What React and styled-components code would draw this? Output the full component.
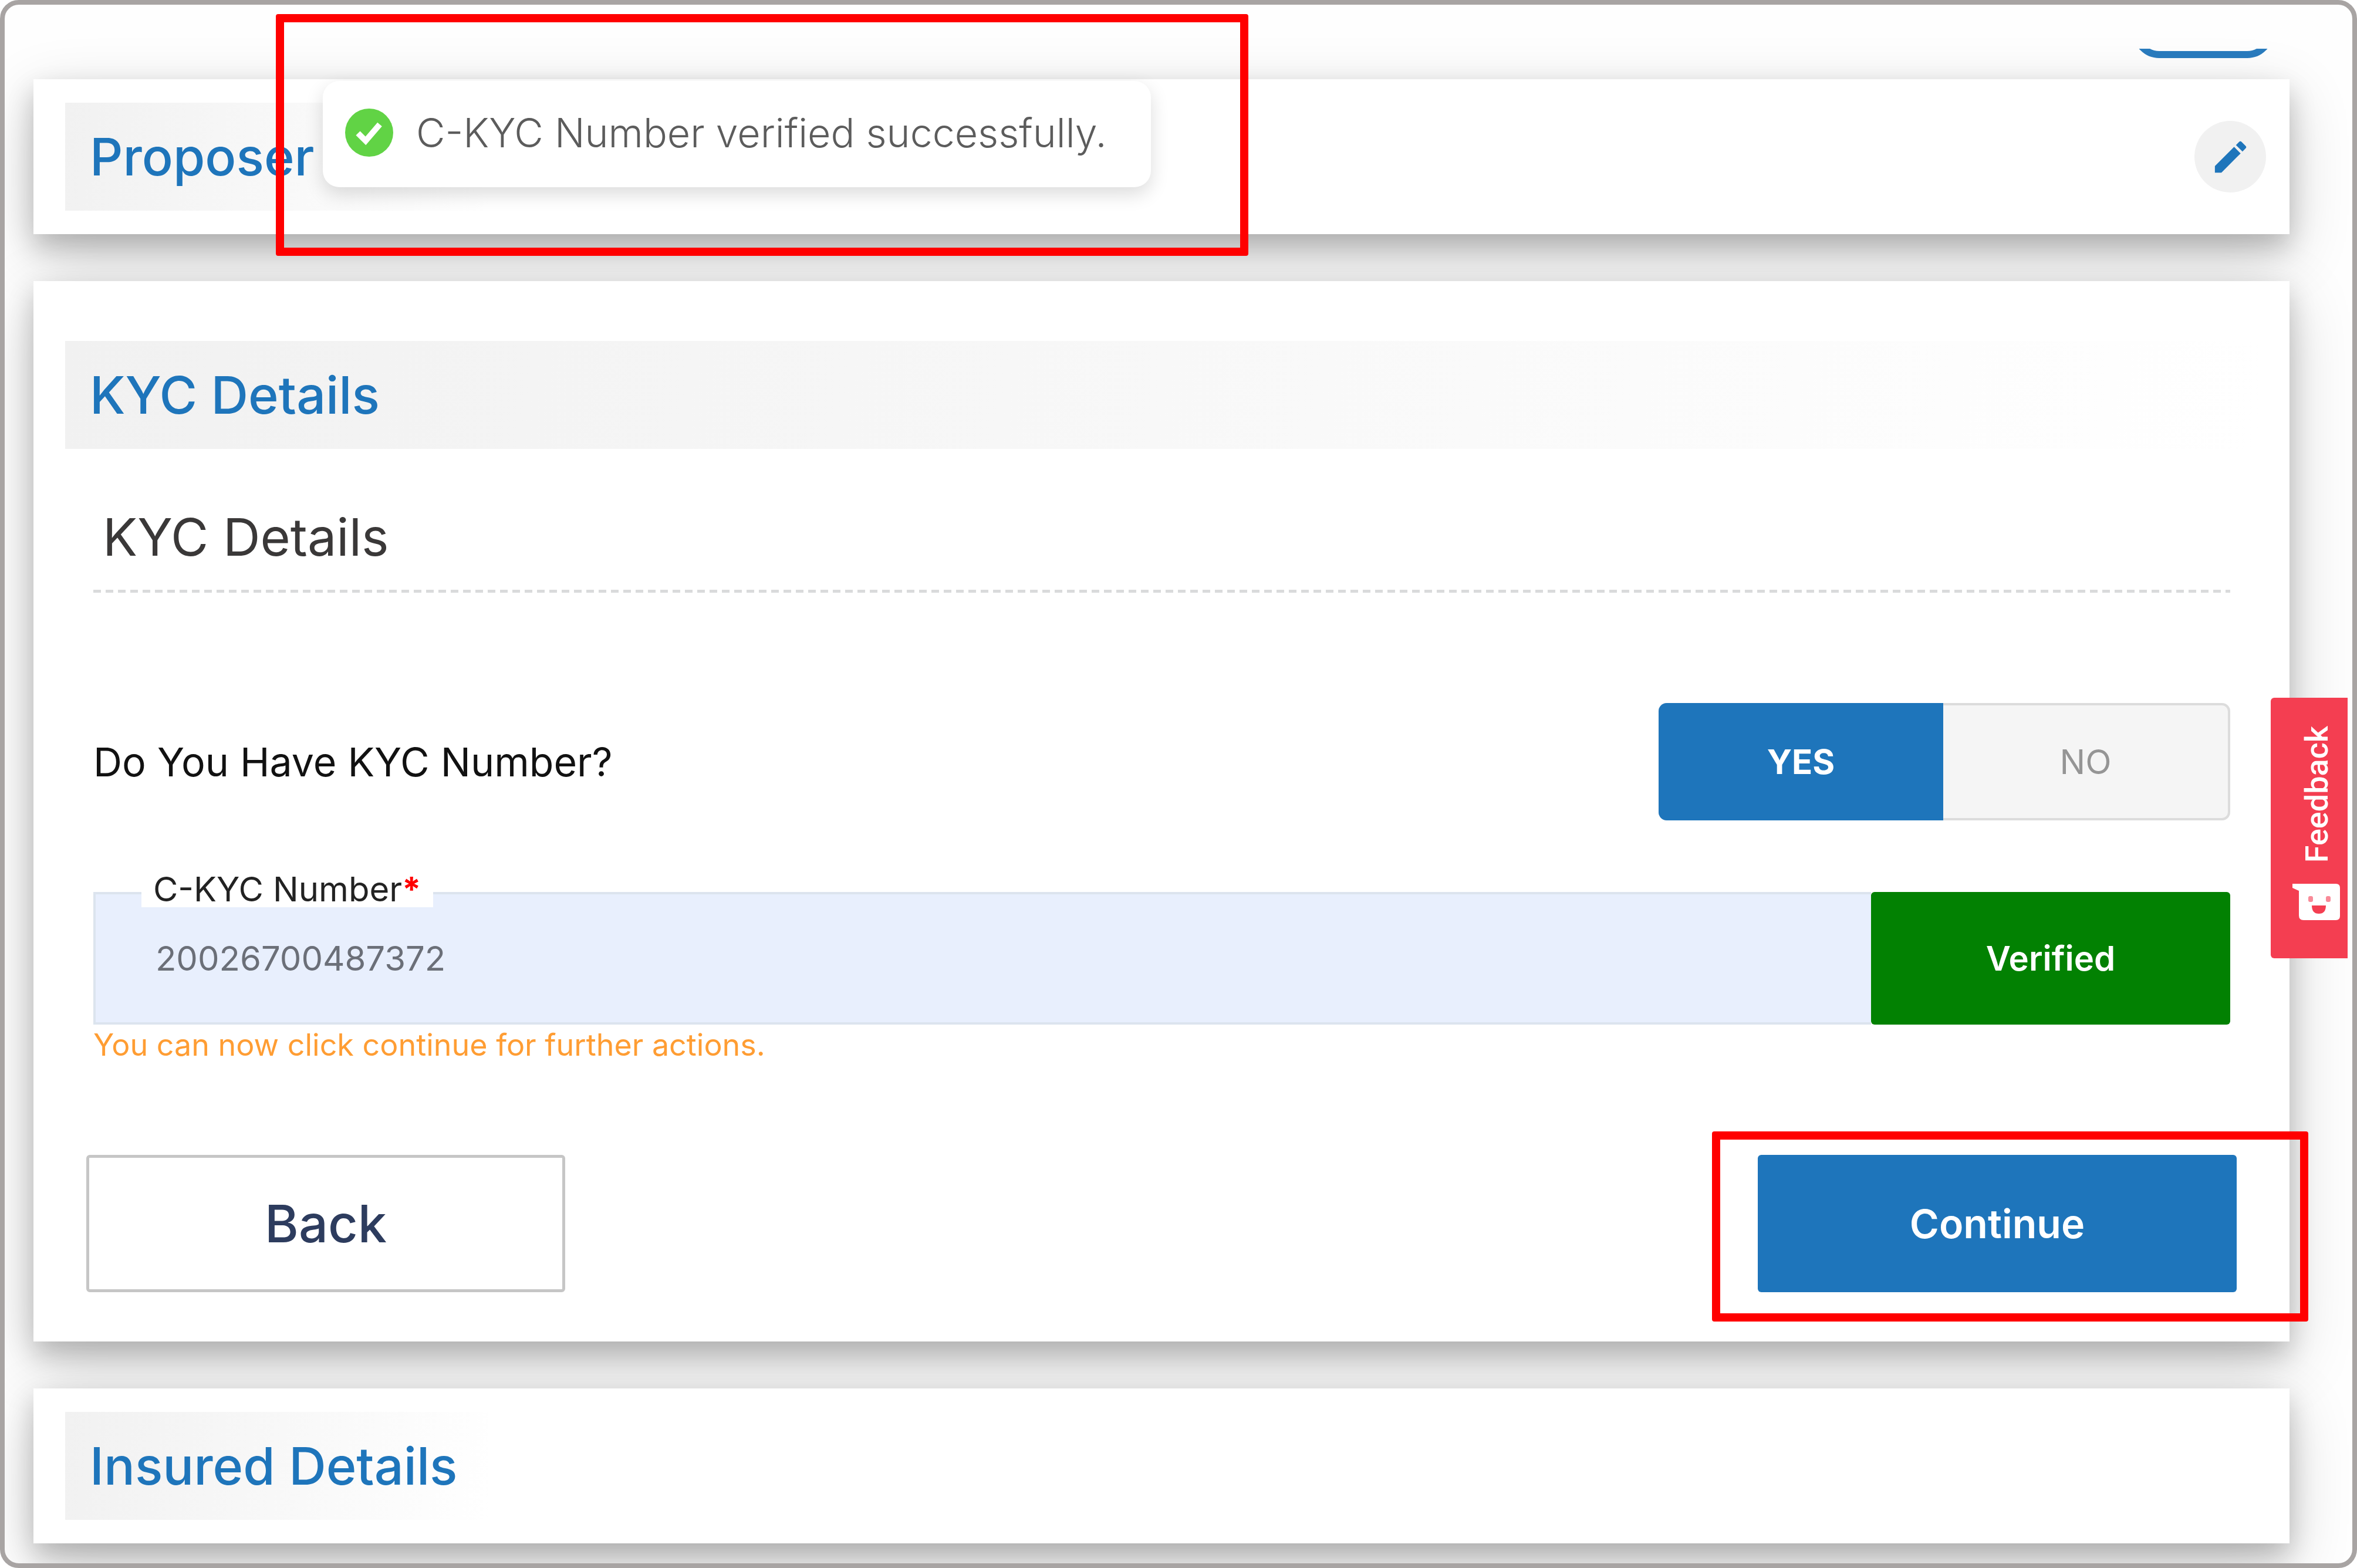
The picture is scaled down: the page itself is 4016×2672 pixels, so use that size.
import React, { useState } from "react";
import styled, { createGlobalStyle } from "styled-components";
import { MdEdit } from "react-icons/md";

function SuccessIcon() {
  return (
    <svg width="84" height="84" viewBox="0 0 84 84" aria-hidden="true">
      <circle cx="42" cy="42" r="41" fill="#61d345" />
      <path d="M23 43l13 13 24-28" fill="none" stroke="#fff" strokeWidth="10" />
    </svg>
  );
}

function FeedbackIcon() {
  return (
    <svg width="82" height="62" viewBox="0 0 82 62" aria-hidden="true">
      <path d="M0 0h74q7 0 7 7v48q0 7-7 7H19q-8 0-8-8V12L0 7z" fill="#fff" />
      <rect x="27" y="21" width="8" height="10" rx="3" fill="#f98a98" />
      <rect x="57" y="21" width="8" height="10" rx="3" fill="#f98a98" />
      <path d="M33 37h24q0 14-12 14T33 37z" fill="#f43e51" />
    </svg>
  );
}

function App() {
  const [hasKyc, setHasKyc] = useState(true);
  const [kycNumber, setKycNumber] = useState("20026700487372");

  return (
    <>
      <GlobalStyle />
      <Frame>
        <TopBar>
          <PillButton type="button" aria-label="Menu" />
        </TopBar>

        <Cards>
          <Card $compact>
            <CardHeading $short>Proposer</CardHeading>
            <EditButton type="button" aria-label="Edit proposer">
              <MdEdit size={71} />
            </EditButton>
          </Card>

          <Card>
            <CardHeading>KYC Details</CardHeading>
            <Section>
              <SectionTitle>KYC Details</SectionTitle>
              <Rule />
              <QuestionRow>
                <Question id="has-kyc">Do You Have KYC Number?</Question>
                <Toggle role="group" aria-labelledby="has-kyc">
                  <ToggleButton
                    type="button"
                    $active={hasKyc}
                    aria-pressed={hasKyc}
                    onClick={() => setHasKyc(true)}
                  >
                    YES
                  </ToggleButton>
                  <ToggleButton
                    type="button"
                    $active={!hasKyc}
                    aria-pressed={!hasKyc}
                    onClick={() => setHasKyc(false)}
                  >
                    NO
                  </ToggleButton>
                </Toggle>
              </QuestionRow>
              <Field>
                <FieldLabel htmlFor="ckyc">
                  C-KYC Number<Required>*</Required>
                </FieldLabel>
                <FieldInput
                  id="ckyc"
                  type="text"
                  value={kycNumber}
                  onChange={(e) => setKycNumber(e.target.value)}
                />
                <VerifyButton type="button">Verified</VerifyButton>
              </Field>
              <Hint>You can now click continue for further actions.</Hint>
            </Section>
            <Actions>
              <ActionButton type="button">Back</ActionButton>
              <Highlighted>
                <ActionButton type="button" $primary>
                  Continue
                </ActionButton>
                <ContinueHighlight />
              </Highlighted>
            </Actions>
          </Card>

          <Card $compact>
            <CardHeading $short>Insured Details</CardHeading>
          </Card>
        </Cards>

        <Toast role="status">
          <SuccessIcon />
          C-KYC Number verified successfully.
        </Toast>
        <ToastHighlight />

        <FeedbackTab type="button">
          <FeedbackText>Feedback</FeedbackText>
          <FeedbackIcon />
        </FeedbackTab>
      </Frame>
    </>
  );
}

export default App;

const GlobalStyle = createGlobalStyle`
  * {
    box-sizing: border-box;
  }

  body {
    margin: 0;
    background: #fff;
    font-family: Inter, sans-serif;
  }

  button,
  input {
    font-family: inherit;
    margin: 0;
  }

  svg {
    display: block;
    flex-shrink: 0;
  }
`;

const Frame = styled.main`
  position: relative;
  min-height: 100vh;
  border: 8px solid #a8a4a3;
  border-radius: 32px;
  background: #fefefe;
  overflow: hidden;
`;

const TopBar = styled.header`
  display: flex;
  justify-content: flex-end;
  align-items: flex-end;
  height: 16px;
  margin-top: 75px;
  padding-right: 134px;
  overflow: hidden;
`;

const PillButton = styled.button`
  flex-shrink: 0;
  width: 240px;
  height: 90px;
  border: 12px solid #2a7cbf;
  border-radius: 45px;
  background: #fff;
`;

const Cards = styled.div`
  display: flex;
  flex-direction: column;
  gap: 80px;
  padding: 36px 107px 28px 49px;
`;

const Card = styled.section`
  position: relative;
  display: flex;
  flex-direction: ${({ $compact }) => ($compact ? "row" : "column")};
  justify-content: space-between;
  align-items: ${({ $compact }) => ($compact ? "center" : "stretch")};
  padding: ${({ $compact }) => ($compact ? "40px 54px" : "102px 54px 84px")};
  background: #fff;
  box-shadow: 0 21px 42px rgba(0, 0, 0, 0.2), 0 32px 105px rgba(0, 0, 0, 0.19);
`;

const CardHeading = styled.h2`
  min-width: ${({ $short }) => ($short ? "720px" : "0")};
  margin: 0;
  padding: 0 42px;
  background: linear-gradient(100deg, #f1f1f1, #fff);
  color: #1e75bb;
  font-size: 88px;
  font-weight: 500;
  line-height: 184px;
`;

const EditButton = styled.button`
  display: flex;
  align-items: center;
  justify-content: center;
  width: 122px;
  height: 122px;
  margin-right: -14px;
  padding: 0;
  border: none;
  border-radius: 50%;
  background: #f1f1f1;
  color: #1e75bb;
`;

const Section = styled.div`
  display: flex;
  flex-direction: column;
  padding: 98px 47px 0 48px;
`;

const SectionTitle = styled.h3`
  margin: 0;
  padding: 0 16px 38px;
  color: #3a3838;
  font-size: 88px;
  font-weight: 400;
  line-height: 104px;
`;

const Rule = styled.div`
  height: 5px;
  background: repeating-linear-gradient(90deg, #d9dadb 0 13px, transparent 13px 21px);
`;

const QuestionRow = styled.div`
  display: flex;
  align-items: center;
  justify-content: space-between;
  margin: 188px 0 122px;
`;

const Question = styled.span`
  color: #111;
  font-size: 68px;
  font-weight: 400;
`;

const Toggle = styled.div`
  display: flex;
  width: 974px;
  height: 200px;
  border: 4px solid #dcdcdc;
  border-radius: 14px;
  background: #f5f5f5;
`;

const ToggleButton = styled.button`
  flex: 1;
  margin: ${({ $active }) => ($active ? "-4px 0 -4px -4px" : "0")};
  border: none;
  border-radius: ${({ $active }) => ($active ? "14px 0 0 14px" : "0")};
  background: ${({ $active }) => ($active ? "#1e75bb" : "transparent")};
  color: ${({ $active }) => ($active ? "#fff" : "#959595")};
  font-size: 58px;
  font-weight: ${({ $active }) => ($active ? 700 : 400)};
`;

const Field = styled.div`
  position: relative;
  display: flex;
  height: 226px;
`;

const FieldLabel = styled.label`
  position: absolute;
  top: -36px;
  left: 82px;
  padding: 0 20px;
  background: #fff;
  color: #222;
  font-size: 58px;
  line-height: 62px;
`;

const Required = styled.span`
  color: #f00;
  font-weight: 700;
`;

const FieldInput = styled.input`
  flex: 1;
  min-width: 0;
  padding: 0 102px;
  border: 4px solid #dce4ee;
  border-right: none;
  background: #e8effd;
  color: #6b6f78;
  font-size: 58px;
`;

const VerifyButton = styled.button`
  width: 612px;
  border: none;
  border-radius: 6px;
  background: #028102;
  color: #fff;
  font-size: 58px;
  font-weight: 600;
`;

const Hint = styled.p`
  margin: 4px 0 0;
  color: #ff9d33;
  font-size: 52px;
  line-height: 62px;
`;

const Actions = styled.div`
  display: flex;
  justify-content: space-between;
  margin-top: 156px;
  padding: 0 36px;
`;

const Highlighted = styled.div`
  position: relative;
`;

const ActionButton = styled.button`
  width: 816px;
  height: 234px;
  border: ${({ $primary }) => ($primary ? "none" : "5px solid #c6c6c6")};
  border-radius: 6px;
  background: ${({ $primary }) => ($primary ? "#1e75bb" : "#fff")};
  color: ${({ $primary }) => ($primary ? "#fff" : "#2d3c5e")};
  font-size: ${({ $primary }) => ($primary ? "68px" : "88px")};
  font-weight: ${({ $primary }) => ($primary ? 600 : 500)};
`;

const Highlight = styled.div`
  position: absolute;
  border: 14px solid #f00;
  border-radius: 4px;
  pointer-events: none;
`;

const ContinueHighlight = styled(Highlight)`
  inset: -40px -122px -50px -78px;
`;

const ToastHighlight = styled(Highlight)`
  top: 16px;
  left: 462px;
  width: 1657px;
  height: 412px;
`;

const Toast = styled.div`
  position: absolute;
  top: 130px;
  left: 542px;
  display: flex;
  align-items: center;
  gap: 38px;
  width: 1411px;
  height: 181px;
  padding: 0 37px 6px;
  border-radius: 28px;
  background: #fff;
  color: #5c5c5c;
  font-size: 68px;
  font-weight: 300;
  white-space: nowrap;
  box-shadow: 0 12px 32px rgba(0, 0, 0, 0.14);
`;

const FeedbackTab = styled.button`
  position: absolute;
  top: 1181px;
  right: 8px;
  display: flex;
  flex-direction: column;
  align-items: flex-end;
  gap: 36px;
  width: 131px;
  height: 444px;
  padding: 48px 12px 0 0;
  border: none;
  border-radius: 6px 0 0 6px;
  background: #f43e51;
  color: #fff;
`;

const FeedbackText = styled.span`
  margin-right: 10px;
  font-family: Roboto, sans-serif;
  font-size: 54px;
  font-weight: 500;
  line-height: 60px;
  writing-mode: vertical-rl;
  transform: rotate(180deg);
`;
